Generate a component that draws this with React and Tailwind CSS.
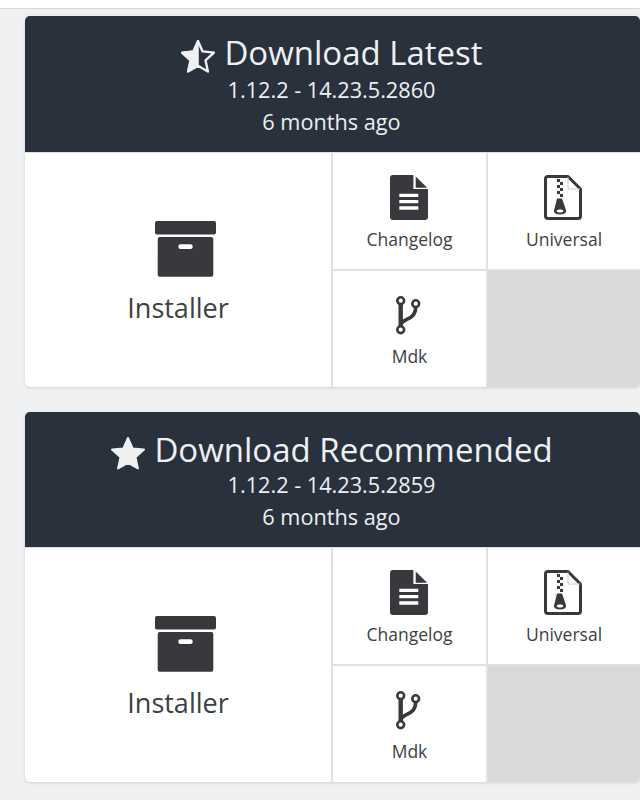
const STAR = "17,1 21.6,11.4 33,12.6 24.5,20.3 26.9,31.5 17,25.8 7.1,31.5 9.5,20.3 1,12.6 12.4,11.4";

function StarHalfIcon() {
  return (
    <svg viewBox="0 0 34 33" className="w-[34px] h-[33px] mt-[6px]">
      <polygon points={STAR} fill="none" stroke="#eef0f2" strokeWidth="2.4" strokeLinejoin="round" />
      <polygon points="17,1 17,25.8 7.1,31.5 9.5,20.3 1,12.6 12.4,11.4" fill="#eef0f2" stroke="#eef0f2" strokeWidth="1.6" strokeLinejoin="round" />
    </svg>
  );
}

function StarIcon() {
  return (
    <svg viewBox="0 0 34 33" className="w-[34px] h-[33px] mt-[6px]">
      <polygon points={STAR} fill="#eef0f2" stroke="#eef0f2" strokeWidth="2" strokeLinejoin="round" />
    </svg>
  );
}

function ArchiveIcon() {
  return (
    <svg viewBox="0 0 61 56" className="w-[61px] h-[56px] ml-[15px] fill-[#37393c]">
      <rect x="0" y="0" width="61" height="13.5" rx="2" />
      <path fillRule="evenodd" d="M4.7 16h51.6a2 2 0 0 1 2 2v35.7a2 2 0 0 1-2 2H4.7a2 2 0 0 1-2-2V18a2 2 0 0 1 2-2zM25.6 23.3a2.3 2.3 0 0 0 0 4.7h9.8a2.3 2.3 0 0 0 0-4.7z" />
    </svg>
  );
}

function FileTextIcon() {
  return (
    <svg viewBox="0 0 38 45" className="w-[38px] h-[45px] fill-[#37393c]">
      <path fillRule="evenodd" d="M3 0h20.4v14H38v28a3 3 0 0 1-3 3H3a3 3 0 0 1-3-3V3a3 3 0 0 1 3-3zM9.3 18.7v3.3h19v-3.3zM9.3 25v3.3h19V25zM9.3 31.3v3.4h19v-3.4z" />
      <path d="M25.7 1.4 37.2 12.7H25.7z" />
    </svg>
  );
}

function FileZipIcon() {
  return (
    <svg viewBox="0 0 38 45" className="w-[38px] h-[45px]">
      <path d="M3.5 1.5H24L36.5 14V41a2.5 2.5 0 0 1-2.5 2.5H4A2.5 2.5 0 0 1 1.5 41V4a2.5 2.5 0 0 1 2-2.5z" fill="none" stroke="#37393c" strokeWidth="3" strokeLinejoin="round" />
      <path d="M24 2v12h12" fill="none" stroke="#c9cacb" strokeWidth="1" />
      <path fill="#37393c" d="M13 4h3v3h-3zM16 7h3v3h-3zM13 10h3v3h-3zM16 13h3v3h-3zM13 16h3v3h-3zM16 19h3v3h-3z" />
      <path fillRule="evenodd" fill="#37393c" d="M13 23.5h5l3.6 10.5c.4 1.2.6 2 .5 2.6-.3 1.8-3 3-6.1 3s-5.8-1.2-6.1-3c-.1-.6.1-1.4.5-2.6zM16 34.4c-1.9 0-3.4.7-3.4 1.5s1.5 1.5 3.4 1.5 3.4-.7 3.4-1.5-1.5-1.5-3.4-1.5z" />
    </svg>
  );
}

function BranchIcon() {
  return (
    <svg viewBox="0 0 26 40" className="w-[26px] h-[40px]" fill="none" stroke="#37393c">
      <path d="M4.7 9v22" strokeWidth="4.4" />
      <path d="M5 29C8 23 19.7 25 19.7 12" strokeWidth="3.6" />
      <circle cx="4.7" cy="5.7" r="3.4" fill="#fff" strokeWidth="2.6" />
      <circle cx="19.7" cy="8.7" r="3.4" fill="#fff" strokeWidth="2.6" />
      <circle cx="4.7" cy="34.7" r="3.4" fill="#fff" strokeWidth="2.6" />
    </svg>
  );
}

function SmallLink({ children, label, labelClass = "mt-[7px]" }) {
  return (
    <a className="flex flex-col items-center bg-white pt-[22px]">
      <div className="h-[45px] flex items-start pr-[2px]">{children}</div>
      <span className={`text-[17.5px] leading-[24px] text-[#3b3f42] ${labelClass}`}>{label}</span>
    </a>
  );
}

function DownloadCard({ icon, title, version, headerClass, versionClass }) {
  return (
    <div className="rounded-[5px] overflow-hidden shadow-[0_1px_3px_rgba(0,0,0,0.12)] bg-[#e0e0e0]">
      <div className={`bg-[#29313d] text-center text-[#eef0f2] ${headerClass}`}>
        <div className="flex items-center justify-center gap-[9px] h-[44px] pr-[1px]">
          {icon}
          <span className="text-[33px] leading-[44px]">{title}</span>
        </div>
        <div className={`text-[21.7px] leading-[32px] pr-[2px] ${versionClass}`}>{version}</div>
        <div className="text-[21.7px] leading-[32px] pr-[2px]">6 months ago</div>
      </div>
      <div className="grid grid-cols-[306px_153px_152px] grid-rows-[116px_116px] gap-[2px] pt-[1px]">
        <a className="row-span-2 flex flex-col items-center bg-white pt-[68px]">
          <ArchiveIcon />
          <span className="mt-[13px] text-[27px] leading-[36px] text-[#3b3f42]">Installer</span>
        </a>
        <SmallLink label="Changelog"><FileTextIcon /></SmallLink>
        <SmallLink label="Universal"><FileZipIcon /></SmallLink>
        <SmallLink label="Mdk" labelClass="mt-[6px]"><div className="mt-[2px]"><BranchIcon /></div></SmallLink>
        <div className="bg-[#d9d9d9]" />
      </div>
    </div>
  );
}

export default function App() {
  return (
    <div className="h-[800px] overflow-hidden bg-[#eef0f2] font-['Open_Sans',sans-serif]">
      <div className="h-[9px] bg-white border-b border-[#d9d9d9]" />
      <div className="ml-[25px] w-[615px] pt-[7px] flex flex-col gap-[25px]">
        <DownloadCard
          icon={<StarHalfIcon />}
          title="Download Latest"
          version="1.12.2 - 14.23.5.2860"
          headerClass="h-[136px] pt-[15px]"
          versionClass="-mt-[1px]"
        />
        <DownloadCard
          icon={<StarIcon />}
          title="Download Recommended"
          version="1.12.2 - 14.23.5.2859"
          headerClass="h-[135px] pt-[16px]"
          versionClass="-mt-[3px]"
        />
      </div>
    </div>
  );
}
